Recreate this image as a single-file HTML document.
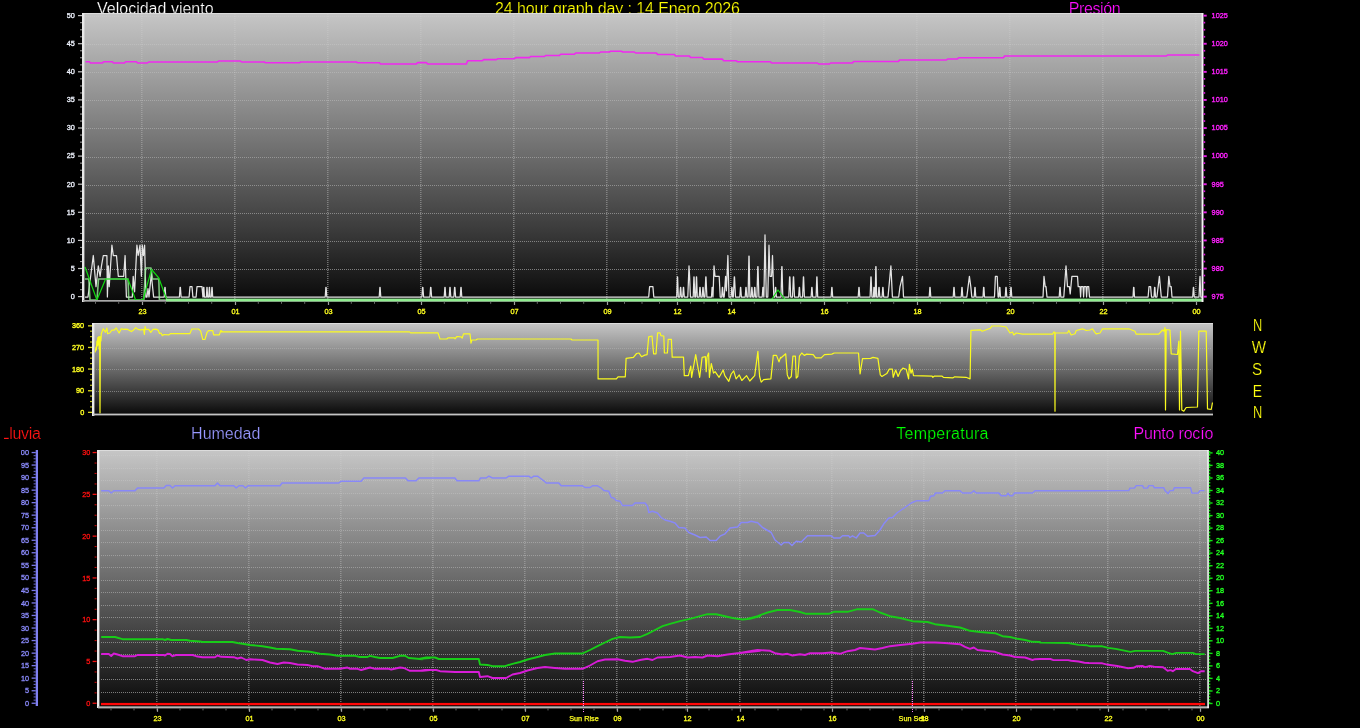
<!DOCTYPE html>
<html lang="es"><head><meta charset="utf-8"><title>24 hour graph</title>
<style>html,body{margin:0;padding:0;background:#000;}body{width:1360px;height:728px;overflow:hidden;font-family:"Liberation Sans",Arial,sans-serif;}svg{display:block;will-change:transform}text{font-family:"Liberation Sans",Arial,sans-serif;}</style>
</head><body>
<svg width="1360" height="728" viewBox="0 0 1360 728">
<defs>
<linearGradient id="g1" x1="0" y1="0" x2="0" y2="1"><stop offset="0" stop-color="rgb(198,198,198)"/><stop offset="0.25" stop-color="rgb(153,153,153)"/><stop offset="0.5" stop-color="rgb(107,107,107)"/><stop offset="0.75" stop-color="rgb(60,60,60)"/><stop offset="1" stop-color="rgb(10,10,10)"/></linearGradient>
<clipPath id="cT"><rect x="83" y="13" width="1120" height="289"/></clipPath>
<clipPath id="cM"><rect x="93" y="323" width="1120" height="93"/></clipPath>
<clipPath id="cB"><rect x="98" y="450" width="1110" height="263"/></clipPath>
<clipPath id="cl"><rect x="4" y="415" width="100" height="34"/></clipPath>
<clipPath id="ch"><rect x="21" y="450" width="30" height="270"/></clipPath>
<clipPath id="cTl"><rect x="0" y="13" width="1360" height="300"/></clipPath>
<clipPath id="cMl"><rect x="0" y="323" width="1360" height="100"/></clipPath>
<clipPath id="cBl"><rect x="0" y="450" width="1360" height="278"/></clipPath>
</defs>
<text x="97.0" y="13.6" fill="#ffffff" font-size="16" text-anchor="start" stroke="#000" stroke-width="0.22" textLength="116.6" lengthAdjust="spacing" >Velocidad viento</text>
<text x="495.0" y="13.6" fill="#ffff00" font-size="16" text-anchor="start" stroke="#000" stroke-width="0.22" textLength="245" lengthAdjust="spacing" >24 hour graph day : 14 Enero 2026</text>
<text x="1068.8" y="13.6" fill="#ff10ff" font-size="16" text-anchor="start" stroke="#000" stroke-width="0.22" textLength="51.8" lengthAdjust="spacing" >Presión</text>
<rect x="83" y="13" width="1120" height="287" fill="url(#g1)"/>
<rect x="83" y="13" width="1120" height="1" fill="#dcdcdc"/>
<line x1="86" x2="1202" y1="269.5" y2="269.5" stroke="#dcdcdc" stroke-opacity="0.51" stroke-width="1" stroke-dasharray="1 1" shape-rendering="crispEdges"/>
<line x1="86" x2="1202" y1="241.5" y2="241.5" stroke="#dcdcdc" stroke-opacity="0.48" stroke-width="1" stroke-dasharray="1 1" shape-rendering="crispEdges"/>
<line x1="86" x2="1202" y1="213.5" y2="213.5" stroke="#dcdcdc" stroke-opacity="0.45" stroke-width="1" stroke-dasharray="1 1" shape-rendering="crispEdges"/>
<line x1="86" x2="1202" y1="185.5" y2="185.5" stroke="#dcdcdc" stroke-opacity="0.42" stroke-width="1" stroke-dasharray="1 1" shape-rendering="crispEdges"/>
<line x1="86" x2="1202" y1="157.5" y2="157.5" stroke="#dcdcdc" stroke-opacity="0.39" stroke-width="1" stroke-dasharray="1 1" shape-rendering="crispEdges"/>
<line x1="86" x2="1202" y1="128.5" y2="128.5" stroke="#dcdcdc" stroke-opacity="0.35" stroke-width="1" stroke-dasharray="1 1" shape-rendering="crispEdges"/>
<line x1="86" x2="1202" y1="100.5" y2="100.5" stroke="#dcdcdc" stroke-opacity="0.32" stroke-width="1" stroke-dasharray="1 1" shape-rendering="crispEdges"/>
<line x1="86" x2="1202" y1="72.5" y2="72.5" stroke="#dcdcdc" stroke-opacity="0.29" stroke-width="1" stroke-dasharray="1 1" shape-rendering="crispEdges"/>
<line x1="86" x2="1202" y1="44.5" y2="44.5" stroke="#dcdcdc" stroke-opacity="0.26" stroke-width="1" stroke-dasharray="1 1" shape-rendering="crispEdges"/>
<line x1="86" x2="1202" y1="16.5" y2="16.5" stroke="#dcdcdc" stroke-opacity="0.22" stroke-width="1" stroke-dasharray="1 1" shape-rendering="crispEdges"/>
<linearGradient id="vgT" gradientUnits="userSpaceOnUse" x1="0" y1="13" x2="0" y2="300"><stop offset="0" stop-color="#dcdcdc" stop-opacity="0.3"/><stop offset="1" stop-color="#dcdcdc" stop-opacity="0.7"/></linearGradient>
<line x1="141.85" x2="141.85" y1="14" y2="300" stroke="url(#vgT)" stroke-width="1" stroke-dasharray="1 1"/>
<line x1="234.85" x2="234.85" y1="14" y2="300" stroke="url(#vgT)" stroke-width="1" stroke-dasharray="1 1"/>
<line x1="327.85" x2="327.85" y1="14" y2="300" stroke="url(#vgT)" stroke-width="1" stroke-dasharray="1 1"/>
<line x1="420.85" x2="420.85" y1="14" y2="300" stroke="url(#vgT)" stroke-width="1" stroke-dasharray="1 1"/>
<line x1="513.85" x2="513.85" y1="14" y2="300" stroke="url(#vgT)" stroke-width="1" stroke-dasharray="1 1"/>
<line x1="606.85" x2="606.85" y1="14" y2="300" stroke="url(#vgT)" stroke-width="1" stroke-dasharray="1 1"/>
<line x1="676.85" x2="676.85" y1="14" y2="300" stroke="url(#vgT)" stroke-width="1" stroke-dasharray="1 1"/>
<line x1="730.85" x2="730.85" y1="14" y2="300" stroke="url(#vgT)" stroke-width="1" stroke-dasharray="1 1"/>
<line x1="823.85" x2="823.85" y1="14" y2="300" stroke="url(#vgT)" stroke-width="1" stroke-dasharray="1 1"/>
<line x1="916.85" x2="916.85" y1="14" y2="300" stroke="url(#vgT)" stroke-width="1" stroke-dasharray="1 1"/>
<line x1="1009.85" x2="1009.85" y1="14" y2="300" stroke="url(#vgT)" stroke-width="1" stroke-dasharray="1 1"/>
<line x1="1102.85" x2="1102.85" y1="14" y2="300" stroke="url(#vgT)" stroke-width="1" stroke-dasharray="1 1"/>
<line x1="1195.85" x2="1195.85" y1="14" y2="300" stroke="url(#vgT)" stroke-width="1" stroke-dasharray="1 1"/>
<g clip-path="url(#cT)">
<polyline points="85.6,61.8 89.4,61.8 90.6,63.0 102.4,63.0 103.6,61.8 112.4,61.8 113.6,63.0 124.4,63.0 125.6,61.8 136.4,61.8 137.6,63.0 147.4,63.0 148.6,62.0 217.4,62.0 218.6,61.0 240.4,61.0 241.6,62.0 264.4,62.0 265.6,62.8 299.4,62.8 300.6,62.0 356.4,62.0 357.6,62.8 379.4,62.8 380.6,64.0 416.4,64.0 417.6,62.6 426.4,62.6 427.6,64.0 466.4,64.0 467.6,60.8 482.4,60.8 483.6,59.6 496.4,59.6 497.6,58.8 514.4,58.8 515.6,57.6 529.4,57.6 530.6,56.5 544.4,56.5 545.6,55.5 559.4,55.5 560.6,54.2 574.4,54.2 575.6,53.0 599.4,53.0 600.6,52.0 609.4,52.0 610.6,51.2 621.4,51.2 622.6,52.0 634.4,52.0 635.6,53.0 656.4,53.0 657.6,54.5 674.4,54.5 675.6,56.0 689.4,56.0 690.6,57.5 702.4,57.5 703.6,59.1 722.4,59.1 723.6,60.8 736.4,60.8 737.6,61.8 770.4,61.8 771.6,63.0 817.4,63.0 818.6,64.0 829.4,64.0 830.6,63.0 852.4,63.0 853.6,61.5 898.4,61.5 899.6,60.0 946.4,60.0 947.6,59.0 957.4,59.0 958.6,57.8 1003.4,57.8 1004.6,56.0 1166.4,56.0 1167.6,55.0 1199.4,55.0" fill="none" stroke="#f028f0" stroke-width="1.6" stroke-linejoin="round" />
<polyline points="85.0,297.0 88.0,297.0 93.3,255.5 96.0,286.6 98.3,265.9 100.1,276.3 101.5,265.9 103.3,255.5 106.9,255.5 107.4,297.0 108.3,265.9 109.2,286.6 111.9,245.2 113.3,255.5 116.5,255.5 118.3,276.3 123.7,276.3 125.1,255.5 126.4,297.0 132.3,297.0 133.2,276.3 134.6,291.8 136.9,245.2 138.2,255.5 140.0,245.2 141.4,276.3 142.3,245.2 143.4,255.5 144.6,245.2 145.9,297.0 147.0,297.0 148.0,288.7 149.0,297.0 151.3,274.2 153.6,297.0 164.2,297.0 164.9,287.3 165.1,287.3 165.8,297.0 179.4,297.0 180.1,287.3 180.4,287.3 181.1,297.0 189.1,297.0 190.0,286.6 192.0,286.6 192.9,297.0 196.1,297.0 197.0,286.6 202.0,286.6 202.9,297.0 203.1,297.0 203.6,287.3 203.9,287.3 204.4,297.0 206.4,297.0 206.9,287.3 207.1,287.3 207.6,297.0 208.8,297.0 209.3,287.3 209.5,287.3 210.0,297.0 211.3,297.0 211.9,287.3 212.1,287.3 212.7,297.0 325.2,297.0 325.9,287.3 326.1,287.3 326.8,297.0 379.2,297.0 379.9,287.3 380.1,287.3 380.8,297.0 421.9,297.0 422.6,287.3 422.9,287.3 423.6,297.0 429.9,297.0 430.6,287.3 430.9,287.3 431.6,297.0 444.2,297.0 444.9,287.3 445.1,287.3 445.8,297.0 449.2,297.0 449.9,287.3 450.1,287.3 450.8,297.0 453.9,297.0 454.6,287.3 454.9,287.3 455.6,297.0 460.2,297.0 460.9,287.3 461.1,287.3 461.8,297.0 648.7,297.0 649.6,286.6 652.9,286.6 653.8,297.0 676.7,297.0 677.4,276.9 677.6,276.9 678.3,297.0 679.8,297.0 680.5,287.3 680.7,287.3 681.4,297.0 682.7,297.0 683.4,287.3 683.6,287.3 684.3,297.0 687.8,297.0 689.0,265.9 689.6,276.3 690.4,297.0 693.2,297.0 693.9,276.9 694.1,276.9 694.8,297.0 695.7,297.0 696.4,276.9 696.6,276.9 697.3,297.0 699.2,297.0 699.9,287.3 700.1,287.3 700.8,297.0 702.2,297.0 702.9,287.3 703.1,287.3 703.8,297.0 704.9,297.0 705.8,276.9 706.0,276.9 706.9,297.0 711.5,297.0 712.1,287.3 712.4,287.3 713.0,297.0 713.0,297.0 714.0,265.9 715.0,276.3 719.2,276.3 720.2,297.0 721.7,297.0 722.4,287.3 722.6,287.3 723.3,297.0 724.2,297.0 725.6,276.3 726.4,290.8 727.9,255.5 729.0,297.0 731.1,297.0 731.8,287.3 732.0,287.3 732.7,297.0 733.3,297.0 734.3,276.9 734.5,276.9 735.5,297.0 739.8,297.0 740.5,287.3 740.7,287.3 741.4,297.0 745.2,297.0 745.9,287.3 746.1,287.3 746.8,297.0 748.1,297.0 748.9,256.1 749.1,256.1 749.9,297.0 751.1,297.0 751.8,287.3 752.0,287.3 752.7,297.0 754.0,297.0 754.6,287.3 754.9,287.3 755.5,297.0 756.9,297.0 757.8,266.5 758.0,266.5 758.9,297.0 762.2,297.0 762.9,287.3 763.1,287.3 763.8,297.0 763.9,297.0 765.0,234.8 766.3,297.0 767.8,297.0 769.0,245.2 770.0,276.3 771.6,276.3 772.5,255.5 773.8,297.0 774.8,297.0 775.5,287.3 775.7,287.3 776.4,297.0 781.0,297.0 781.8,266.5 782.0,266.5 782.8,297.0 788.8,297.0 789.6,276.9 789.9,276.9 790.7,297.0 792.5,297.0 793.4,276.9 793.6,276.9 794.5,297.0 798.6,297.0 799.3,287.3 799.5,287.3 800.2,297.0 802.6,297.0 803.4,276.9 803.6,276.9 804.4,297.0 811.1,297.0 811.8,287.3 812.0,287.3 812.7,297.0 816.1,297.0 816.8,276.9 817.0,276.9 817.7,297.0 831.1,297.0 831.8,287.3 832.0,287.3 832.7,297.0 858.2,297.0 858.9,287.3 859.1,287.3 859.8,297.0 870.1,297.0 870.9,276.9 871.1,276.9 871.9,297.0 873.4,297.0 873.9,287.3 874.1,287.3 874.6,297.0 875.2,297.0 875.8,266.5 876.0,266.5 876.6,297.0 878.2,297.0 878.9,287.3 879.1,287.3 879.8,297.0 882.1,297.0 882.8,287.3 883.0,287.3 883.7,297.0 888.0,297.0 890.9,265.9 892.4,297.0 898.7,297.0 900.0,286.6 902.5,276.3 903.5,297.0 929.2,297.0 929.9,287.3 930.1,287.3 930.8,297.0 953.2,297.0 953.9,287.3 954.1,287.3 954.8,297.0 961.2,297.0 961.9,287.3 962.1,287.3 962.8,297.0 966.8,297.0 969.4,276.3 970.8,286.6 971.8,297.0 974.2,297.0 974.9,287.3 975.1,287.3 975.8,297.0 983.0,297.0 983.6,287.3 983.9,287.3 984.5,297.0 994.5,297.0 995.4,276.3 997.2,276.3 998.1,297.0 999.0,297.0 999.6,287.3 999.9,287.3 1000.5,297.0 1005.2,297.0 1005.9,287.3 1006.1,287.3 1006.8,297.0 1010.2,297.0 1010.9,287.3 1011.1,287.3 1011.8,297.0 1043.0,297.0 1044.0,276.3 1045.2,286.6 1046.0,286.6 1047.0,297.0 1059.2,297.0 1059.9,287.3 1060.1,287.3 1060.8,297.0 1063.8,297.0 1066.0,265.9 1067.5,286.6 1069.4,286.6 1070.2,293.9 1071.9,276.3 1077.5,276.3 1078.2,286.6 1080.0,286.6 1080.6,297.0 1081.2,286.6 1083.0,286.6 1083.6,297.0 1084.2,286.6 1086.0,286.6 1086.6,297.0 1087.2,286.6 1088.7,286.6 1089.5,297.0 1133.0,297.0 1133.6,287.3 1133.9,287.3 1134.5,297.0 1148.1,297.0 1149.0,286.6 1150.6,286.6 1151.5,297.0 1154.0,297.0 1154.6,287.3 1154.9,287.3 1155.5,297.0 1156.9,297.0 1159.4,276.3 1161.3,297.0 1167.5,297.0 1168.8,276.3 1170.0,286.6 1171.2,286.6 1172.0,297.0 1192.7,297.0 1193.4,287.3 1193.6,287.3 1194.3,297.0 1199.0,297.0 1200.0,276.3 1200.8,297.0 1202.0,297.0" fill="none" stroke="#e4e4e4" stroke-width="1.25" stroke-linejoin="round" />
<polyline points="85.0,279.0 88.8,279.0 90.0,300.0 97.0,300.0 98.5,279.0 128.0,279.0 128.8,300.0 143.8,300.0 145.6,268.0 151.0,268.0 152.5,279.0 158.8,279.0 159.4,300.0 170.0,300.0" fill="none" stroke="#98ee98" stroke-width="1.6" stroke-linejoin="round" stroke-opacity="0.8"/>
<polyline points="85.0,267.0 96.9,300.0 105.6,279.0 128.0,279.0 135.6,300.0 143.0,300.0 151.5,269.4 158.8,278.0 166.9,300.0" fill="none" stroke="#10d810" stroke-width="1.2" stroke-linejoin="round" />
<polyline points="771.2,300.0 778.0,290.0 785.6,300.0" fill="none" stroke="#10d810" stroke-width="1.2" stroke-linejoin="round" />
</g>
<rect x="82" y="13" width="2.4" height="289" fill="#e8e8e8"/>
<rect x="83" y="300" width="1120" height="1.7" fill="#a8a8a8"/>
<rect x="166" y="298.6" width="1036" height="2.8" fill="#90ee90"/>
<rect x="1201.6" y="13" width="1.9" height="289" fill="#f4f4f4"/>
<g clip-path="url(#cTl)" font-size="7.3">
<rect x="78" y="296.0" width="4" height="1.2" fill="#c0c0c0"/>
<rect x="1203.4" y="295.7" width="3.3" height="1.9" fill="#e820e8"/>
<text x="74.8" y="298.9" fill="#f0f4ff" text-anchor="end" stroke="#f0f4ff" stroke-width="0.3">0</text>
<text x="1211.6" y="298.9" fill="#ff20ff" text-anchor="start" stroke="#ff20ff" stroke-width="0.35">975</text>
<rect x="80" y="289.1" width="2" height="1.1" fill="#909090"/>
<rect x="1203.4" y="288.8" width="1.8" height="1.7" fill="#d818d8"/>
<rect x="80" y="282.1" width="2" height="1.1" fill="#909090"/>
<rect x="1203.4" y="281.8" width="1.8" height="1.7" fill="#d818d8"/>
<rect x="80" y="275.0" width="2" height="1.1" fill="#909090"/>
<rect x="1203.4" y="274.7" width="1.8" height="1.7" fill="#d818d8"/>
<rect x="78" y="267.9" width="4" height="1.2" fill="#c0c0c0"/>
<rect x="1203.4" y="267.6" width="3.3" height="1.9" fill="#e820e8"/>
<text x="74.8" y="270.8" fill="#f0f4ff" text-anchor="end" stroke="#f0f4ff" stroke-width="0.3">5</text>
<text x="1211.6" y="270.8" fill="#ff20ff" text-anchor="start" stroke="#ff20ff" stroke-width="0.35">980</text>
<rect x="80" y="261.0" width="2" height="1.1" fill="#909090"/>
<rect x="1203.4" y="260.7" width="1.8" height="1.7" fill="#d818d8"/>
<rect x="80" y="254.0" width="2" height="1.1" fill="#909090"/>
<rect x="1203.4" y="253.7" width="1.8" height="1.7" fill="#d818d8"/>
<rect x="80" y="246.9" width="2" height="1.1" fill="#909090"/>
<rect x="1203.4" y="246.6" width="1.8" height="1.7" fill="#d818d8"/>
<rect x="78" y="239.8" width="4" height="1.2" fill="#c0c0c0"/>
<rect x="1203.4" y="239.5" width="3.3" height="1.9" fill="#e820e8"/>
<text x="74.8" y="242.7" fill="#f0f4ff" text-anchor="end" stroke="#f0f4ff" stroke-width="0.3">10</text>
<text x="1211.6" y="242.7" fill="#ff20ff" text-anchor="start" stroke="#ff20ff" stroke-width="0.35">985</text>
<rect x="80" y="232.9" width="2" height="1.1" fill="#909090"/>
<rect x="1203.4" y="232.6" width="1.8" height="1.7" fill="#d818d8"/>
<rect x="80" y="225.9" width="2" height="1.1" fill="#909090"/>
<rect x="1203.4" y="225.6" width="1.8" height="1.7" fill="#d818d8"/>
<rect x="80" y="218.8" width="2" height="1.1" fill="#909090"/>
<rect x="1203.4" y="218.5" width="1.8" height="1.7" fill="#d818d8"/>
<rect x="78" y="211.7" width="4" height="1.2" fill="#c0c0c0"/>
<rect x="1203.4" y="211.4" width="3.3" height="1.9" fill="#e820e8"/>
<text x="74.8" y="214.6" fill="#f0f4ff" text-anchor="end" stroke="#f0f4ff" stroke-width="0.3">15</text>
<text x="1211.6" y="214.6" fill="#ff20ff" text-anchor="start" stroke="#ff20ff" stroke-width="0.35">990</text>
<rect x="80" y="204.8" width="2" height="1.1" fill="#909090"/>
<rect x="1203.4" y="204.5" width="1.8" height="1.7" fill="#d818d8"/>
<rect x="80" y="197.8" width="2" height="1.1" fill="#909090"/>
<rect x="1203.4" y="197.4" width="1.8" height="1.7" fill="#d818d8"/>
<rect x="80" y="190.7" width="2" height="1.1" fill="#909090"/>
<rect x="1203.4" y="190.4" width="1.8" height="1.7" fill="#d818d8"/>
<rect x="78" y="183.6" width="4" height="1.2" fill="#c0c0c0"/>
<rect x="1203.4" y="183.3" width="3.3" height="1.9" fill="#e820e8"/>
<text x="74.8" y="186.5" fill="#f0f4ff" text-anchor="end" stroke="#f0f4ff" stroke-width="0.3">20</text>
<text x="1211.6" y="186.5" fill="#ff20ff" text-anchor="start" stroke="#ff20ff" stroke-width="0.35">995</text>
<rect x="80" y="176.7" width="2" height="1.1" fill="#909090"/>
<rect x="1203.4" y="176.4" width="1.8" height="1.7" fill="#d818d8"/>
<rect x="80" y="169.7" width="2" height="1.1" fill="#909090"/>
<rect x="1203.4" y="169.4" width="1.8" height="1.7" fill="#d818d8"/>
<rect x="80" y="162.6" width="2" height="1.1" fill="#909090"/>
<rect x="1203.4" y="162.3" width="1.8" height="1.7" fill="#d818d8"/>
<rect x="78" y="155.5" width="4" height="1.2" fill="#c0c0c0"/>
<rect x="1203.4" y="155.2" width="3.3" height="1.9" fill="#e820e8"/>
<text x="74.8" y="158.4" fill="#f0f4ff" text-anchor="end" stroke="#f0f4ff" stroke-width="0.3">25</text>
<text x="1211.6" y="158.4" fill="#ff20ff" text-anchor="start" stroke="#ff20ff" stroke-width="0.35">1000</text>
<rect x="80" y="148.6" width="2" height="1.1" fill="#909090"/>
<rect x="1203.4" y="148.3" width="1.8" height="1.7" fill="#d818d8"/>
<rect x="80" y="141.6" width="2" height="1.1" fill="#909090"/>
<rect x="1203.4" y="141.2" width="1.8" height="1.7" fill="#d818d8"/>
<rect x="80" y="134.5" width="2" height="1.1" fill="#909090"/>
<rect x="1203.4" y="134.2" width="1.8" height="1.7" fill="#d818d8"/>
<rect x="78" y="127.4" width="4" height="1.2" fill="#c0c0c0"/>
<rect x="1203.4" y="127.1" width="3.3" height="1.9" fill="#e820e8"/>
<text x="74.8" y="130.3" fill="#f0f4ff" text-anchor="end" stroke="#f0f4ff" stroke-width="0.3">30</text>
<text x="1211.6" y="130.3" fill="#ff20ff" text-anchor="start" stroke="#ff20ff" stroke-width="0.35">1005</text>
<rect x="80" y="120.5" width="2" height="1.1" fill="#909090"/>
<rect x="1203.4" y="120.2" width="1.8" height="1.7" fill="#d818d8"/>
<rect x="80" y="113.5" width="2" height="1.1" fill="#909090"/>
<rect x="1203.4" y="113.2" width="1.8" height="1.7" fill="#d818d8"/>
<rect x="80" y="106.4" width="2" height="1.1" fill="#909090"/>
<rect x="1203.4" y="106.1" width="1.8" height="1.7" fill="#d818d8"/>
<rect x="78" y="99.3" width="4" height="1.2" fill="#c0c0c0"/>
<rect x="1203.4" y="99.0" width="3.3" height="1.9" fill="#e820e8"/>
<text x="74.8" y="102.2" fill="#f0f4ff" text-anchor="end" stroke="#f0f4ff" stroke-width="0.3">35</text>
<text x="1211.6" y="102.2" fill="#ff20ff" text-anchor="start" stroke="#ff20ff" stroke-width="0.35">1010</text>
<rect x="80" y="92.4" width="2" height="1.1" fill="#909090"/>
<rect x="1203.4" y="92.1" width="1.8" height="1.7" fill="#d818d8"/>
<rect x="80" y="85.4" width="2" height="1.1" fill="#909090"/>
<rect x="1203.4" y="85.1" width="1.8" height="1.7" fill="#d818d8"/>
<rect x="80" y="78.3" width="2" height="1.1" fill="#909090"/>
<rect x="1203.4" y="78.0" width="1.8" height="1.7" fill="#d818d8"/>
<rect x="78" y="71.2" width="4" height="1.2" fill="#c0c0c0"/>
<rect x="1203.4" y="70.9" width="3.3" height="1.9" fill="#e820e8"/>
<text x="74.8" y="74.1" fill="#f0f4ff" text-anchor="end" stroke="#f0f4ff" stroke-width="0.3">40</text>
<text x="1211.6" y="74.1" fill="#ff20ff" text-anchor="start" stroke="#ff20ff" stroke-width="0.35">1015</text>
<rect x="80" y="64.3" width="2" height="1.1" fill="#909090"/>
<rect x="1203.4" y="64.0" width="1.8" height="1.7" fill="#d818d8"/>
<rect x="80" y="57.2" width="2" height="1.1" fill="#909090"/>
<rect x="1203.4" y="57.0" width="1.8" height="1.7" fill="#d818d8"/>
<rect x="80" y="50.2" width="2" height="1.1" fill="#909090"/>
<rect x="1203.4" y="49.9" width="1.8" height="1.7" fill="#d818d8"/>
<rect x="78" y="43.1" width="4" height="1.2" fill="#c0c0c0"/>
<rect x="1203.4" y="42.8" width="3.3" height="1.9" fill="#e820e8"/>
<text x="74.8" y="46.0" fill="#f0f4ff" text-anchor="end" stroke="#f0f4ff" stroke-width="0.3">45</text>
<text x="1211.6" y="46.0" fill="#ff20ff" text-anchor="start" stroke="#ff20ff" stroke-width="0.35">1020</text>
<rect x="80" y="36.2" width="2" height="1.1" fill="#909090"/>
<rect x="1203.4" y="35.9" width="1.8" height="1.7" fill="#d818d8"/>
<rect x="80" y="29.2" width="2" height="1.1" fill="#909090"/>
<rect x="1203.4" y="28.9" width="1.8" height="1.7" fill="#d818d8"/>
<rect x="80" y="22.1" width="2" height="1.1" fill="#909090"/>
<rect x="1203.4" y="21.8" width="1.8" height="1.7" fill="#d818d8"/>
<rect x="78" y="15.0" width="4" height="1.2" fill="#c0c0c0"/>
<rect x="1203.4" y="14.7" width="3.3" height="1.9" fill="#e820e8"/>
<text x="74.8" y="17.9" fill="#f0f4ff" text-anchor="end" stroke="#f0f4ff" stroke-width="0.3">50</text>
<text x="1211.6" y="17.9" fill="#ff20ff" text-anchor="start" stroke="#ff20ff" stroke-width="0.35">1025</text>
</g>
<rect x="164.8" y="301.8" width="1" height="2" fill="#686868"/>
<rect x="188.0" y="301.8" width="1" height="2" fill="#686868"/>
<rect x="211.2" y="301.8" width="1" height="2" fill="#686868"/>
<rect x="257.8" y="301.8" width="1" height="2" fill="#686868"/>
<rect x="281.0" y="301.8" width="1" height="2" fill="#686868"/>
<rect x="304.2" y="301.8" width="1" height="2" fill="#686868"/>
<rect x="350.8" y="301.8" width="1" height="2" fill="#686868"/>
<rect x="374.0" y="301.8" width="1" height="2" fill="#686868"/>
<rect x="397.2" y="301.8" width="1" height="2" fill="#686868"/>
<rect x="443.8" y="301.8" width="1" height="2" fill="#686868"/>
<rect x="467.0" y="301.8" width="1" height="2" fill="#686868"/>
<rect x="490.2" y="301.8" width="1" height="2" fill="#686868"/>
<rect x="536.8" y="301.8" width="1" height="2" fill="#686868"/>
<rect x="560.0" y="301.8" width="1" height="2" fill="#686868"/>
<rect x="583.2" y="301.8" width="1" height="2" fill="#686868"/>
<rect x="624.0" y="301.8" width="1" height="2" fill="#686868"/>
<rect x="641.5" y="301.8" width="1" height="2" fill="#686868"/>
<rect x="659.0" y="301.8" width="1" height="2" fill="#686868"/>
<rect x="690.0" y="301.8" width="1" height="2" fill="#686868"/>
<rect x="703.5" y="301.8" width="1" height="2" fill="#686868"/>
<rect x="717.0" y="301.8" width="1" height="2" fill="#686868"/>
<rect x="753.8" y="301.8" width="1" height="2" fill="#686868"/>
<rect x="777.0" y="301.8" width="1" height="2" fill="#686868"/>
<rect x="800.2" y="301.8" width="1" height="2" fill="#686868"/>
<rect x="846.8" y="301.8" width="1" height="2" fill="#686868"/>
<rect x="870.0" y="301.8" width="1" height="2" fill="#686868"/>
<rect x="893.2" y="301.8" width="1" height="2" fill="#686868"/>
<rect x="939.8" y="301.8" width="1" height="2" fill="#686868"/>
<rect x="963.0" y="301.8" width="1" height="2" fill="#686868"/>
<rect x="986.2" y="301.8" width="1" height="2" fill="#686868"/>
<rect x="1032.8" y="301.8" width="1" height="2" fill="#686868"/>
<rect x="1056.0" y="301.8" width="1" height="2" fill="#686868"/>
<rect x="1079.2" y="301.8" width="1" height="2" fill="#686868"/>
<rect x="1125.8" y="301.8" width="1" height="2" fill="#686868"/>
<rect x="1149.0" y="301.8" width="1" height="2" fill="#686868"/>
<rect x="1172.2" y="301.8" width="1" height="2" fill="#686868"/>
<rect x="118.2" y="301.8" width="1" height="2" fill="#686868"/>
<rect x="95.0" y="301.8" width="1" height="2" fill="#686868"/>
<g font-size="7.3">
<rect x="141.9" y="301.8" width="1.2" height="3.2" fill="#a0a0a0"/>
<text x="142.5" y="313.5" fill="#ffff20" text-anchor="middle" stroke="#ffff20" stroke-width="0.3">23</text>
<rect x="234.9" y="301.8" width="1.2" height="3.2" fill="#a0a0a0"/>
<text x="235.5" y="313.5" fill="#ffff20" text-anchor="middle" stroke="#ffff20" stroke-width="0.3">01</text>
<rect x="327.9" y="301.8" width="1.2" height="3.2" fill="#a0a0a0"/>
<text x="328.5" y="313.5" fill="#ffff20" text-anchor="middle" stroke="#ffff20" stroke-width="0.3">03</text>
<rect x="420.9" y="301.8" width="1.2" height="3.2" fill="#a0a0a0"/>
<text x="421.5" y="313.5" fill="#ffff20" text-anchor="middle" stroke="#ffff20" stroke-width="0.3">05</text>
<rect x="513.9" y="301.8" width="1.2" height="3.2" fill="#a0a0a0"/>
<text x="514.5" y="313.5" fill="#ffff20" text-anchor="middle" stroke="#ffff20" stroke-width="0.3">07</text>
<rect x="606.9" y="301.8" width="1.2" height="3.2" fill="#a0a0a0"/>
<text x="607.5" y="313.5" fill="#ffff20" text-anchor="middle" stroke="#ffff20" stroke-width="0.3">09</text>
<rect x="676.9" y="301.8" width="1.2" height="3.2" fill="#a0a0a0"/>
<text x="677.5" y="313.5" fill="#ffff20" text-anchor="middle" stroke="#ffff20" stroke-width="0.3">12</text>
<rect x="730.9" y="301.8" width="1.2" height="3.2" fill="#a0a0a0"/>
<text x="731.5" y="313.5" fill="#ffff20" text-anchor="middle" stroke="#ffff20" stroke-width="0.3">14</text>
<rect x="823.9" y="301.8" width="1.2" height="3.2" fill="#a0a0a0"/>
<text x="824.5" y="313.5" fill="#ffff20" text-anchor="middle" stroke="#ffff20" stroke-width="0.3">16</text>
<rect x="916.9" y="301.8" width="1.2" height="3.2" fill="#a0a0a0"/>
<text x="917.5" y="313.5" fill="#ffff20" text-anchor="middle" stroke="#ffff20" stroke-width="0.3">18</text>
<rect x="1009.9" y="301.8" width="1.2" height="3.2" fill="#a0a0a0"/>
<text x="1010.5" y="313.5" fill="#ffff20" text-anchor="middle" stroke="#ffff20" stroke-width="0.3">20</text>
<rect x="1102.9" y="301.8" width="1.2" height="3.2" fill="#a0a0a0"/>
<text x="1103.5" y="313.5" fill="#ffff20" text-anchor="middle" stroke="#ffff20" stroke-width="0.3">22</text>
<rect x="1195.9" y="301.8" width="1.2" height="3.2" fill="#a0a0a0"/>
<text x="1196.5" y="313.5" fill="#ffff20" text-anchor="middle" stroke="#ffff20" stroke-width="0.3">00</text>
</g>
<rect x="93" y="323" width="1120" height="91" fill="url(#g1)"/>
<rect x="93" y="323" width="1120" height="1" fill="#dcdcdc"/>
<line x1="96" x2="1212" y1="348.5" y2="348.5" stroke="#dcdcdc" stroke-opacity="0.25" stroke-width="1" stroke-dasharray="1 1" shape-rendering="crispEdges"/>
<line x1="96" x2="1212" y1="369.5" y2="369.5" stroke="#dcdcdc" stroke-opacity="0.33" stroke-width="1" stroke-dasharray="1 1" shape-rendering="crispEdges"/>
<line x1="96" x2="1212" y1="391.5" y2="391.5" stroke="#dcdcdc" stroke-opacity="0.41" stroke-width="1" stroke-dasharray="1 1" shape-rendering="crispEdges"/>
<g clip-path="url(#cM)">
<polyline points="95.1,352.4 96.0,347.0 96.4,350.0 96.9,341.0 97.3,346.0 97.8,337.5 98.3,345.0 98.8,336.5 99.2,349.0 99.6,336.5 100.0,413.0 100.4,336.5 100.9,341.0 101.3,335.0 101.1,334.5 101.8,332.3 103.3,328.7 105.4,332.3 106.9,328.0 107.6,333.7 109.7,333.0 111.9,330.1 114.1,330.1 116.2,328.0 119.1,333.0 121.3,328.7 123.4,329.4 125.6,329.1 127.8,329.4 131.4,331.6 133.5,330.1 135.7,327.7 137.9,329.4 140.7,329.9 143.6,329.4 144.4,334.5 145.1,326.5 145.8,329.4 148.7,329.4 150.8,332.3 153.0,329.4 155.9,329.1 158.1,330.1 159.5,333.5 160.9,333.0 162.4,335.6 163.8,334.5 168.9,334.9 170.3,333.7 189.8,333.7 191.9,329.0 198.4,329.0 200.6,330.9 202.8,339.5 204.9,339.5 207.1,332.3 208.5,330.6 212.8,330.6 213.6,334.9 219.3,334.9 220.8,330.6 222.9,332.0 221.0,331.9 409.4,331.9 410.6,332.9 438.0,332.9 440.0,339.0 446.9,339.0 448.0,337.8 454.4,337.8 455.0,338.8 456.9,336.5 461.2,336.9 462.2,338.1 463.5,333.8 470.0,333.8 471.0,343.1 471.9,340.0 476.2,339.8 477.5,339.0 571.0,339.0 572.0,340.0 598.0,340.0 598.1,378.9 616.4,378.9 618.0,376.8 625.3,376.8 626.1,358.4 633.4,357.4 636.6,353.5 639.0,353.0 641.5,356.7 644.7,355.1 647.1,354.6 648.7,336.8 652.0,336.0 653.6,353.8 656.0,353.8 657.6,332.8 660.1,332.8 660.9,335.7 663.8,336.0 664.4,353.0 667.4,353.0 668.2,339.3 671.4,339.3 672.2,357.1 683.5,357.1 684.3,375.7 688.4,375.7 690.8,366.0 691.6,377.3 695.7,354.6 699.7,377.3 702.1,357.4 705.4,356.7 706.2,371.6 707.0,357.1 708.6,353.0 709.4,377.3 711.3,363.5 713.5,373.2 715.1,371.6 719.1,377.3 723.2,370.0 724.8,375.7 728.8,381.3 731.2,374.0 733.7,370.8 736.1,378.9 739.3,374.9 741.8,380.5 746.6,375.7 749.8,381.0 754.7,375.7 757.9,351.4 759.6,376.5 761.2,382.1 763.6,379.7 770.9,378.9 773.3,355.4 776.5,355.4 779.0,361.9 780.6,357.4 780.0,358.7 785.7,353.8 787.3,374.9 788.9,378.9 791.3,376.5 792.9,356.2 795.4,356.2 796.2,378.1 797.8,376.5 799.4,356.2 801.8,353.0 804.3,355.4 806.7,354.1 813.2,354.6 815.6,357.9 821.2,357.9 824.5,354.6 831.8,354.1 834.2,353.0 858.5,353.0 860.1,374.0 862.5,358.7 870.6,358.4 873.0,357.4 877.9,358.4 880.3,374.9 881.9,376.5 886.8,373.6 889.2,369.2 892.4,369.2 893.2,377.3 895.7,370.0 898.1,376.5 900.5,370.8 902.9,368.1 906.2,369.2 908.6,378.9 909.4,364.3 911.0,373.2 912.3,369.2 913.5,375.7 932.1,376.1 932.9,377.3 934.5,376.1 941.8,376.1 943.4,377.3 953.1,377.8 954.7,376.8 966.0,377.3 970.1,378.9 970.9,330.4 980.6,329.9 982.2,331.2 990.3,328.3 991.9,326.0 1000.0,326.0 1006.2,327.0 1010.0,333.0 1012.5,332.0 1013.8,335.0 1016.2,333.0 1022.5,334.2 1052.5,334.2 1053.8,332.0 1054.8,332.0 1055.0,411.2 1055.2,333.0 1067.5,333.0 1068.8,330.5 1071.2,335.0 1075.0,333.8 1076.2,330.5 1082.5,328.8 1086.2,330.5 1090.0,330.0 1092.5,328.8 1095.0,332.5 1096.2,333.8 1100.0,333.0 1102.5,328.8 1128.8,328.8 1135.0,331.2 1136.2,334.2 1158.8,334.2 1162.5,330.0 1163.8,331.2 1165.0,327.5 1165.5,410.0 1166.2,329.5 1170.0,330.0 1171.2,353.8 1177.5,354.5 1178.8,341.2 1179.5,410.0 1180.5,331.2 1181.8,410.0 1183.8,411.2 1186.2,407.5 1197.5,407.0 1198.8,331.2 1206.2,331.2 1207.5,408.8 1211.2,409.5 1212.5,402.5" fill="none" stroke="#fafa20" stroke-width="1.2" stroke-linejoin="round" />
</g>
<rect x="92" y="323" width="2.4" height="93" fill="#ececec"/>
<rect x="93" y="413.6" width="1120" height="1.8" fill="#c4c4c4"/>
<g clip-path="url(#cMl)" font-size="7.3">
<rect x="88" y="411.7" width="4" height="1.3" fill="#d8d820"/>
<text x="84.2" y="414.9" fill="#ffff20" text-anchor="end" stroke="#ffff20" stroke-width="0.35">0</text>
<rect x="90" y="406.3" width="2" height="1.2" fill="#b8b818"/>
<rect x="90" y="400.9" width="2" height="1.2" fill="#b8b818"/>
<rect x="90" y="395.5" width="2" height="1.2" fill="#b8b818"/>
<rect x="88" y="390.1" width="4" height="1.3" fill="#d8d820"/>
<text x="84.2" y="393.3" fill="#ffff20" text-anchor="end" stroke="#ffff20" stroke-width="0.35">90</text>
<rect x="90" y="384.7" width="2" height="1.2" fill="#b8b818"/>
<rect x="90" y="379.3" width="2" height="1.2" fill="#b8b818"/>
<rect x="90" y="373.8" width="2" height="1.2" fill="#b8b818"/>
<rect x="88" y="368.4" width="4" height="1.3" fill="#d8d820"/>
<text x="84.2" y="371.6" fill="#ffff20" text-anchor="end" stroke="#ffff20" stroke-width="0.35">180</text>
<rect x="90" y="363.0" width="2" height="1.2" fill="#b8b818"/>
<rect x="90" y="357.6" width="2" height="1.2" fill="#b8b818"/>
<rect x="90" y="352.2" width="2" height="1.2" fill="#b8b818"/>
<rect x="88" y="346.8" width="4" height="1.3" fill="#d8d820"/>
<text x="84.2" y="350.0" fill="#ffff20" text-anchor="end" stroke="#ffff20" stroke-width="0.35">270</text>
<rect x="90" y="341.4" width="2" height="1.2" fill="#b8b818"/>
<rect x="90" y="336.0" width="2" height="1.2" fill="#b8b818"/>
<rect x="90" y="330.6" width="2" height="1.2" fill="#b8b818"/>
<rect x="88" y="325.2" width="4" height="1.3" fill="#d8d820"/>
<text x="84.2" y="328.4" fill="#ffff20" text-anchor="end" stroke="#ffff20" stroke-width="0.35">360</text>
</g>
<text x="1252.9" y="330.6" fill="#ffff10" font-size="16" textLength="9.24" lengthAdjust="spacingAndGlyphs" stroke="#000" stroke-width="0.22">N</text>
<text x="1251.7" y="353.1" fill="#ffff10" font-size="16" textLength="14.34" lengthAdjust="spacingAndGlyphs" stroke="#000" stroke-width="0.22">W</text>
<text x="1252.1" y="375.4" fill="#ffff10" font-size="16" textLength="10.14" lengthAdjust="spacingAndGlyphs" stroke="#000" stroke-width="0.22">S</text>
<text x="1252.8" y="397.1" fill="#ffff10" font-size="16" textLength="9.28" lengthAdjust="spacingAndGlyphs" stroke="#000" stroke-width="0.22">E</text>
<text x="1252.9" y="417.7" fill="#ffff10" font-size="16" textLength="9.24" lengthAdjust="spacingAndGlyphs" stroke="#000" stroke-width="0.22">N</text>
<g clip-path="url(#cl)"><text x="0.5" y="438.8" fill="#ff1414" font-size="16" text-anchor="start" stroke="#000" stroke-width="0.22" textLength="40.5" lengthAdjust="spacing" >Lluvia</text></g>
<text x="191.1" y="438.8" fill="#9898ff" font-size="16" text-anchor="start" stroke="#000" stroke-width="0.22" textLength="69.2" lengthAdjust="spacing" >Humedad</text>
<text x="896.3" y="438.8" fill="#00ff00" font-size="16" text-anchor="start" stroke="#000" stroke-width="0.22" textLength="92.2" lengthAdjust="spacing" >Temperatura</text>
<text x="1133.5" y="438.8" fill="#ff10ff" font-size="16" text-anchor="start" stroke="#000" stroke-width="0.22" textLength="79.8" lengthAdjust="spacing" >Punto rocío</text>
<rect x="98" y="450" width="1110" height="256" fill="url(#g1)"/>
<rect x="98" y="450" width="1110" height="1" fill="#dcdcdc"/>
<line x1="101" x2="1207" y1="692.5" y2="692.5" stroke="#dcdcdc" stroke-opacity="0.53" stroke-width="1" stroke-dasharray="1 1" shape-rendering="crispEdges"/>
<line x1="101" x2="1207" y1="679.5" y2="679.5" stroke="#dcdcdc" stroke-opacity="0.52" stroke-width="1" stroke-dasharray="1 1" shape-rendering="crispEdges"/>
<line x1="101" x2="1207" y1="667.5" y2="667.5" stroke="#dcdcdc" stroke-opacity="0.50" stroke-width="1" stroke-dasharray="1 1" shape-rendering="crispEdges"/>
<line x1="101" x2="1207" y1="654.5" y2="654.5" stroke="#dcdcdc" stroke-opacity="0.48" stroke-width="1" stroke-dasharray="1 1" shape-rendering="crispEdges"/>
<line x1="101" x2="1207" y1="642.5" y2="642.5" stroke="#dcdcdc" stroke-opacity="0.47" stroke-width="1" stroke-dasharray="1 1" shape-rendering="crispEdges"/>
<line x1="101" x2="1207" y1="630.5" y2="630.5" stroke="#dcdcdc" stroke-opacity="0.45" stroke-width="1" stroke-dasharray="1 1" shape-rendering="crispEdges"/>
<line x1="101" x2="1207" y1="617.5" y2="617.5" stroke="#dcdcdc" stroke-opacity="0.44" stroke-width="1" stroke-dasharray="1 1" shape-rendering="crispEdges"/>
<line x1="101" x2="1207" y1="605.5" y2="605.5" stroke="#dcdcdc" stroke-opacity="0.42" stroke-width="1" stroke-dasharray="1 1" shape-rendering="crispEdges"/>
<line x1="101" x2="1207" y1="592.5" y2="592.5" stroke="#dcdcdc" stroke-opacity="0.40" stroke-width="1" stroke-dasharray="1 1" shape-rendering="crispEdges"/>
<line x1="101" x2="1207" y1="580.5" y2="580.5" stroke="#dcdcdc" stroke-opacity="0.39" stroke-width="1" stroke-dasharray="1 1" shape-rendering="crispEdges"/>
<line x1="101" x2="1207" y1="567.5" y2="567.5" stroke="#dcdcdc" stroke-opacity="0.37" stroke-width="1" stroke-dasharray="1 1" shape-rendering="crispEdges"/>
<line x1="101" x2="1207" y1="555.5" y2="555.5" stroke="#dcdcdc" stroke-opacity="0.36" stroke-width="1" stroke-dasharray="1 1" shape-rendering="crispEdges"/>
<line x1="101" x2="1207" y1="542.5" y2="542.5" stroke="#dcdcdc" stroke-opacity="0.34" stroke-width="1" stroke-dasharray="1 1" shape-rendering="crispEdges"/>
<line x1="101" x2="1207" y1="530.5" y2="530.5" stroke="#dcdcdc" stroke-opacity="0.32" stroke-width="1" stroke-dasharray="1 1" shape-rendering="crispEdges"/>
<line x1="101" x2="1207" y1="518.5" y2="518.5" stroke="#dcdcdc" stroke-opacity="0.31" stroke-width="1" stroke-dasharray="1 1" shape-rendering="crispEdges"/>
<line x1="101" x2="1207" y1="505.5" y2="505.5" stroke="#dcdcdc" stroke-opacity="0.29" stroke-width="1" stroke-dasharray="1 1" shape-rendering="crispEdges"/>
<line x1="101" x2="1207" y1="493.5" y2="493.5" stroke="#dcdcdc" stroke-opacity="0.28" stroke-width="1" stroke-dasharray="1 1" shape-rendering="crispEdges"/>
<line x1="101" x2="1207" y1="480.5" y2="480.5" stroke="#dcdcdc" stroke-opacity="0.26" stroke-width="1" stroke-dasharray="1 1" shape-rendering="crispEdges"/>
<line x1="101" x2="1207" y1="468.5" y2="468.5" stroke="#dcdcdc" stroke-opacity="0.24" stroke-width="1" stroke-dasharray="1 1" shape-rendering="crispEdges"/>
<line x1="101" x2="1207" y1="455.5" y2="455.5" stroke="#dcdcdc" stroke-opacity="0.23" stroke-width="1" stroke-dasharray="1 1" shape-rendering="crispEdges"/>
<linearGradient id="vgB" gradientUnits="userSpaceOnUse" x1="0" y1="450" x2="0" y2="706"><stop offset="0" stop-color="#dcdcdc" stop-opacity="0.3"/><stop offset="1" stop-color="#dcdcdc" stop-opacity="0.7"/></linearGradient>
<line x1="156.85" x2="156.85" y1="451" y2="706" stroke="url(#vgB)" stroke-width="1" stroke-dasharray="1 1"/>
<line x1="248.85" x2="248.85" y1="451" y2="706" stroke="url(#vgB)" stroke-width="1" stroke-dasharray="1 1"/>
<line x1="340.85" x2="340.85" y1="451" y2="706" stroke="url(#vgB)" stroke-width="1" stroke-dasharray="1 1"/>
<line x1="432.85" x2="432.85" y1="451" y2="706" stroke="url(#vgB)" stroke-width="1" stroke-dasharray="1 1"/>
<line x1="524.85" x2="524.85" y1="451" y2="706" stroke="url(#vgB)" stroke-width="1" stroke-dasharray="1 1"/>
<line x1="616.85" x2="616.85" y1="451" y2="706" stroke="url(#vgB)" stroke-width="1" stroke-dasharray="1 1"/>
<line x1="686.85" x2="686.85" y1="451" y2="706" stroke="url(#vgB)" stroke-width="1" stroke-dasharray="1 1"/>
<line x1="739.85" x2="739.85" y1="451" y2="706" stroke="url(#vgB)" stroke-width="1" stroke-dasharray="1 1"/>
<line x1="831.85" x2="831.85" y1="451" y2="706" stroke="url(#vgB)" stroke-width="1" stroke-dasharray="1 1"/>
<line x1="923.85" x2="923.85" y1="451" y2="706" stroke="url(#vgB)" stroke-width="1" stroke-dasharray="1 1"/>
<line x1="1015.85" x2="1015.85" y1="451" y2="706" stroke="url(#vgB)" stroke-width="1" stroke-dasharray="1 1"/>
<line x1="1107.85" x2="1107.85" y1="451" y2="706" stroke="url(#vgB)" stroke-width="1" stroke-dasharray="1 1"/>
<line x1="1199.85" x2="1199.85" y1="451" y2="706" stroke="url(#vgB)" stroke-width="1" stroke-dasharray="1 1"/>
<linearGradient id="vgB2" gradientUnits="userSpaceOnUse" x1="0" y1="450" x2="0" y2="706"><stop offset="0" stop-color="#dcdcdc" stop-opacity="0.18"/><stop offset="1" stop-color="#dcdcdc" stop-opacity="0.4"/></linearGradient>
<line x1="582.85" x2="582.85" y1="451" y2="706" stroke="url(#vgB2)" stroke-width="1" stroke-dasharray="1 1"/>
<line x1="911.85" x2="911.85" y1="451" y2="706" stroke="url(#vgB2)" stroke-width="1" stroke-dasharray="1 1"/>
<g clip-path="url(#cB)">
<polyline points="101.2,490.8 108.8,490.8 111.2,493.0 113.8,490.8 135.0,490.8 137.5,488.0 163.8,488.0 166.2,485.5 170.0,485.5 172.5,488.0 175.0,485.8 215.0,485.8 217.5,483.0 220.0,485.8 233.8,485.8 236.2,488.0 238.8,485.8 243.0,485.8 245.5,488.0 248.0,485.8 280.0,485.8 282.0,483.0 338.8,483.0 341.2,481.2 361.2,481.2 363.8,478.0 405.5,478.0 408.0,480.8 416.2,480.8 418.8,478.0 430.0,478.0 455.0,478.0 457.0,480.8 478.8,480.8 480.5,478.0 486.2,478.0 488.8,476.2 492.5,478.0 506.2,478.0 508.8,476.2 528.8,476.2 531.2,478.0 533.8,476.2 537.5,476.2 540.0,478.0 543.8,480.8 546.2,483.0 558.8,483.0 561.2,485.8 582.5,485.8 585.0,487.5 590.0,487.5 592.5,485.8 597.5,485.8 601.2,488.0 603.8,490.5 608.8,491.2 611.2,497.5 613.8,498.0 616.2,500.5 620.0,501.2 622.5,505.5 632.5,505.5 635.0,503.0 645.0,503.0 647.5,506.2 648.8,512.5 652.5,511.2 657.5,513.0 661.2,517.5 665.0,520.0 670.0,521.2 675.0,523.0 678.8,527.5 685.0,528.0 688.8,532.5 695.0,535.0 700.0,537.5 706.2,537.0 710.0,540.5 716.2,540.5 720.0,536.2 725.0,533.8 730.0,528.0 737.5,527.0 741.2,522.5 747.5,522.5 751.2,521.2 756.2,522.5 757.5,522.5 762.5,527.5 771.2,532.5 775.0,540.0 781.2,545.0 783.8,542.5 788.8,542.5 792.0,545.5 796.2,541.2 801.2,542.0 807.5,535.8 831.2,535.8 833.8,538.0 840.0,538.0 842.5,535.8 848.8,535.8 850.0,537.5 852.5,535.8 856.2,538.0 860.0,533.0 863.8,533.0 867.5,536.2 875.0,535.5 880.0,530.0 883.8,523.8 888.8,518.0 892.5,517.5 897.5,512.5 905.0,507.5 911.2,503.0 916.2,500.8 928.8,500.8 930.5,496.2 933.8,495.8 935.5,493.0 942.5,493.0 945.0,490.8 960.0,490.8 962.5,493.0 971.2,493.0 973.8,490.8 976.2,493.0 998.8,493.0 1001.2,495.8 1006.2,495.8 1008.0,493.2 1010.0,495.8 1012.5,495.8 1014.5,493.0 1032.5,493.0 1035.0,490.8 1080.0,490.8 1128.8,490.6 1130.0,488.1 1134.4,488.1 1136.2,485.6 1142.5,485.6 1143.8,488.1 1147.5,488.1 1148.8,485.6 1153.1,485.6 1154.4,487.8 1163.8,487.8 1165.0,490.6 1168.1,493.5 1170.0,490.6 1173.1,490.6 1174.4,487.8 1190.6,487.8 1191.9,493.1 1198.1,493.1 1200.0,490.6 1204.4,490.6" fill="none" stroke="#8888f8" stroke-width="1.45" stroke-linejoin="round" />
<polyline points="101.2,637.0 115.0,637.0 122.5,639.2 162.5,639.2 165.0,640.0 167.5,639.0 171.2,640.0 186.2,640.0 190.0,640.8 200.0,641.5 202.5,642.0 232.5,642.0 237.5,643.0 242.5,643.8 250.0,645.0 262.5,646.2 270.0,647.5 276.2,648.8 290.0,649.2 297.5,650.8 310.0,651.8 320.0,653.8 330.0,654.5 337.5,655.8 355.0,655.8 360.0,657.0 367.5,657.0 370.0,655.8 375.0,657.0 380.0,658.0 392.5,658.0 400.0,655.8 405.0,655.8 408.8,658.0 417.5,658.8 422.5,659.2 426.2,658.0 430.0,658.0 420.0,658.8 426.2,657.5 435.0,657.5 438.8,659.0 478.8,659.0 480.0,664.5 487.5,665.0 492.5,666.2 505.0,666.2 512.5,663.8 520.0,662.0 527.5,659.5 537.5,657.0 545.0,655.0 555.0,653.5 582.5,653.5 590.0,650.0 597.5,646.2 605.0,642.5 612.5,638.8 620.0,637.0 630.0,637.5 640.0,637.0 647.5,633.8 655.0,630.0 662.5,626.2 670.0,623.8 680.0,621.2 690.0,618.8 700.0,616.2 707.5,614.2 716.2,614.2 725.0,616.2 732.5,618.0 742.5,619.5 750.0,618.8 760.0,616.2 747.5,618.8 757.5,616.2 767.5,612.5 777.5,610.0 790.0,610.0 800.0,612.0 806.2,613.8 828.8,613.8 833.8,611.8 847.5,611.8 857.5,609.2 872.5,609.2 880.0,612.5 890.0,616.2 900.0,618.0 912.5,621.2 927.5,622.0 935.0,624.2 947.5,625.8 960.0,627.5 970.0,630.8 980.0,632.0 995.0,633.2 1002.5,636.2 1010.0,637.0 1017.5,638.8 1025.0,640.0 1032.5,641.8 1040.0,642.0 1040.0,642.6 1068.2,643.0 1078.6,644.9 1086.0,645.2 1090.4,646.3 1102.3,646.3 1108.2,647.9 1115.7,648.9 1123.1,650.4 1130.5,651.9 1135.0,650.9 1163.1,650.9 1167.6,652.6 1172.0,654.1 1176.5,652.9 1192.8,652.9 1195.8,654.1 1204.7,654.1" fill="none" stroke="#18cc18" stroke-width="1.9" stroke-linejoin="round" />
<polyline points="101.2,654.0 108.8,654.0 111.2,656.0 113.8,653.5 117.5,654.5 122.5,656.2 135.0,656.2 137.5,655.0 163.8,655.0 165.0,655.5 167.5,653.8 170.0,654.0 172.5,656.2 176.2,655.0 192.5,655.0 196.2,656.2 202.5,657.2 215.0,657.2 217.5,655.5 221.2,656.8 233.8,657.2 237.5,658.5 241.2,657.5 246.2,660.0 250.0,659.2 262.5,660.0 270.0,662.5 277.5,664.0 283.8,662.5 290.0,663.0 297.5,664.5 307.5,665.0 312.5,666.2 317.5,666.2 325.0,668.8 340.0,668.8 347.5,667.5 350.0,668.8 357.5,668.8 361.2,670.0 370.0,667.5 375.0,668.8 388.8,668.8 391.2,669.5 400.0,667.5 403.8,668.0 410.0,670.8 422.5,670.8 430.0,670.0 420.0,670.8 425.0,670.0 436.2,670.0 440.0,671.2 455.0,672.0 478.8,672.0 480.0,677.0 487.5,676.2 492.5,678.0 506.2,678.0 512.5,674.5 520.0,673.0 527.5,670.5 537.5,668.0 545.0,667.0 555.0,668.0 565.0,668.8 582.5,668.8 590.0,665.5 597.5,661.2 605.0,659.5 617.5,659.2 625.0,660.8 632.5,661.8 640.0,660.0 647.5,658.8 652.5,660.0 657.5,657.5 670.0,657.0 680.0,655.5 687.5,657.5 695.0,657.0 702.5,657.5 707.5,655.5 717.5,656.2 727.5,654.5 737.5,653.2 745.0,652.5 752.5,650.8 760.0,650.8 740.0,653.0 750.0,651.2 757.5,650.0 770.0,650.8 775.0,653.2 782.5,654.5 787.5,653.8 792.5,655.5 800.0,654.2 805.0,655.0 810.0,653.2 822.5,653.2 831.2,652.5 840.0,653.8 847.5,651.2 855.0,650.0 860.0,648.0 867.5,648.8 875.0,649.5 882.5,648.0 890.0,646.2 900.0,645.0 912.5,643.8 920.0,642.5 935.0,642.5 945.0,643.0 960.0,644.2 965.0,646.8 970.0,648.8 973.8,647.5 977.5,650.0 995.0,651.8 1002.5,654.5 1010.0,655.5 1015.0,657.0 1025.0,657.5 1032.5,660.0 1035.0,659.2 1040.0,659.0 1050.4,659.0 1053.4,660.1 1068.2,660.1 1071.2,660.8 1078.6,661.5 1084.5,662.7 1089.0,663.0 1102.3,663.3 1108.2,664.8 1117.2,666.0 1124.6,667.5 1127.5,668.2 1133.5,667.8 1136.4,666.3 1142.4,666.0 1145.3,667.2 1149.8,666.0 1154.2,666.7 1163.1,667.2 1167.6,670.7 1170.6,670.1 1172.8,671.2 1175.8,669.0 1189.9,669.0 1192.8,671.2 1198.0,673.1 1201.0,671.2 1204.7,671.2" fill="none" stroke="#d81cd8" stroke-width="1.9" stroke-linejoin="round" />
<rect x="101" y="702.9" width="1104" height="2.3" fill="#ff0808"/>
<line x1="583.5" x2="583.5" y1="681" y2="712" stroke="#ff80ff" stroke-width="1.2" stroke-dasharray="1 1" shape-rendering="crispEdges"/>
<line x1="912.5" x2="912.5" y1="681" y2="712" stroke="#ff80ff" stroke-width="1.2" stroke-dasharray="1 1" shape-rendering="crispEdges"/>
</g>
<rect x="97" y="450" width="2.4" height="258" fill="#ececec"/>
<rect x="98" y="706.3" width="1111" height="2.1" fill="#b4b4b4"/>
<rect x="1207.3" y="450" width="1.6" height="258" fill="#f4f4f4"/>
<line x1="1209.6" x2="1209.6" y1="451" y2="705" stroke="#10e010" stroke-width="1.4" stroke-dasharray="1.6 1.5"/>
<g clip-path="url(#cBl)" font-size="7.3">
<rect x="92.6" y="702.6" width="4" height="1.3" fill="#f01010"/>
<text x="90.4" y="705.8" fill="#ff1010" text-anchor="end" stroke="#ff1010" stroke-width="0.3">0</text>
<rect x="94.6" y="692.3" width="2" height="1.1" fill="#c00808"/>
<rect x="94.6" y="681.8" width="2" height="1.1" fill="#c00808"/>
<rect x="94.6" y="671.4" width="2" height="1.1" fill="#c00808"/>
<rect x="92.6" y="660.8" width="4" height="1.3" fill="#f01010"/>
<text x="90.4" y="664.0" fill="#ff1010" text-anchor="end" stroke="#ff1010" stroke-width="0.3">5</text>
<rect x="94.6" y="650.5" width="2" height="1.1" fill="#c00808"/>
<rect x="94.6" y="640.0" width="2" height="1.1" fill="#c00808"/>
<rect x="94.6" y="629.6" width="2" height="1.1" fill="#c00808"/>
<rect x="92.6" y="619.0" width="4" height="1.3" fill="#f01010"/>
<text x="90.4" y="622.2" fill="#ff1010" text-anchor="end" stroke="#ff1010" stroke-width="0.3">10</text>
<rect x="94.6" y="608.7" width="2" height="1.1" fill="#c00808"/>
<rect x="94.6" y="598.2" width="2" height="1.1" fill="#c00808"/>
<rect x="94.6" y="587.8" width="2" height="1.1" fill="#c00808"/>
<rect x="92.6" y="577.3" width="4" height="1.3" fill="#f01010"/>
<text x="90.4" y="580.5" fill="#ff1010" text-anchor="end" stroke="#ff1010" stroke-width="0.3">15</text>
<rect x="94.6" y="566.9" width="2" height="1.1" fill="#c00808"/>
<rect x="94.6" y="556.5" width="2" height="1.1" fill="#c00808"/>
<rect x="94.6" y="546.0" width="2" height="1.1" fill="#c00808"/>
<rect x="92.6" y="535.5" width="4" height="1.3" fill="#f01010"/>
<text x="90.4" y="538.7" fill="#ff1010" text-anchor="end" stroke="#ff1010" stroke-width="0.3">20</text>
<rect x="94.6" y="525.1" width="2" height="1.1" fill="#c00808"/>
<rect x="94.6" y="514.7" width="2" height="1.1" fill="#c00808"/>
<rect x="94.6" y="504.2" width="2" height="1.1" fill="#c00808"/>
<rect x="92.6" y="493.7" width="4" height="1.3" fill="#f01010"/>
<text x="90.4" y="496.9" fill="#ff1010" text-anchor="end" stroke="#ff1010" stroke-width="0.3">25</text>
<rect x="94.6" y="483.4" width="2" height="1.1" fill="#c00808"/>
<rect x="94.6" y="472.9" width="2" height="1.1" fill="#c00808"/>
<rect x="94.6" y="462.5" width="2" height="1.1" fill="#c00808"/>
<rect x="92.6" y="451.9" width="4" height="1.3" fill="#f01010"/>
<text x="90.4" y="455.1" fill="#ff1010" text-anchor="end" stroke="#ff1010" stroke-width="0.3">30</text>
<rect x="1209" y="702.8" width="3.6" height="1.4" fill="#10e010"/>
<text x="1216" y="705.7" fill="#20ff20" text-anchor="start" stroke="#20ff20" stroke-width="0.35">0</text>
<rect x="1209" y="690.3" width="3.6" height="1.4" fill="#10e010"/>
<text x="1216" y="693.2" fill="#20ff20" text-anchor="start" stroke="#20ff20" stroke-width="0.35">2</text>
<rect x="1209" y="677.7" width="3.6" height="1.4" fill="#10e010"/>
<text x="1216" y="680.6" fill="#20ff20" text-anchor="start" stroke="#20ff20" stroke-width="0.35">4</text>
<rect x="1209" y="665.2" width="3.6" height="1.4" fill="#10e010"/>
<text x="1216" y="668.1" fill="#20ff20" text-anchor="start" stroke="#20ff20" stroke-width="0.35">6</text>
<rect x="1209" y="652.7" width="3.6" height="1.4" fill="#10e010"/>
<text x="1216" y="655.6" fill="#20ff20" text-anchor="start" stroke="#20ff20" stroke-width="0.35">8</text>
<rect x="1209" y="640.1" width="3.6" height="1.4" fill="#10e010"/>
<text x="1216" y="643.1" fill="#20ff20" text-anchor="start" stroke="#20ff20" stroke-width="0.35">10</text>
<rect x="1209" y="627.6" width="3.6" height="1.4" fill="#10e010"/>
<text x="1216" y="630.5" fill="#20ff20" text-anchor="start" stroke="#20ff20" stroke-width="0.35">12</text>
<rect x="1209" y="615.1" width="3.6" height="1.4" fill="#10e010"/>
<text x="1216" y="618.0" fill="#20ff20" text-anchor="start" stroke="#20ff20" stroke-width="0.35">14</text>
<rect x="1209" y="602.6" width="3.6" height="1.4" fill="#10e010"/>
<text x="1216" y="605.5" fill="#20ff20" text-anchor="start" stroke="#20ff20" stroke-width="0.35">16</text>
<rect x="1209" y="590.0" width="3.6" height="1.4" fill="#10e010"/>
<text x="1216" y="592.9" fill="#20ff20" text-anchor="start" stroke="#20ff20" stroke-width="0.35">18</text>
<rect x="1209" y="577.5" width="3.6" height="1.4" fill="#10e010"/>
<text x="1216" y="580.4" fill="#20ff20" text-anchor="start" stroke="#20ff20" stroke-width="0.35">20</text>
<rect x="1209" y="565.0" width="3.6" height="1.4" fill="#10e010"/>
<text x="1216" y="567.9" fill="#20ff20" text-anchor="start" stroke="#20ff20" stroke-width="0.35">22</text>
<rect x="1209" y="552.4" width="3.6" height="1.4" fill="#10e010"/>
<text x="1216" y="555.3" fill="#20ff20" text-anchor="start" stroke="#20ff20" stroke-width="0.35">24</text>
<rect x="1209" y="539.9" width="3.6" height="1.4" fill="#10e010"/>
<text x="1216" y="542.8" fill="#20ff20" text-anchor="start" stroke="#20ff20" stroke-width="0.35">26</text>
<rect x="1209" y="527.4" width="3.6" height="1.4" fill="#10e010"/>
<text x="1216" y="530.3" fill="#20ff20" text-anchor="start" stroke="#20ff20" stroke-width="0.35">28</text>
<rect x="1209" y="514.9" width="3.6" height="1.4" fill="#10e010"/>
<text x="1216" y="517.8" fill="#20ff20" text-anchor="start" stroke="#20ff20" stroke-width="0.35">30</text>
<rect x="1209" y="502.3" width="3.6" height="1.4" fill="#10e010"/>
<text x="1216" y="505.2" fill="#20ff20" text-anchor="start" stroke="#20ff20" stroke-width="0.35">32</text>
<rect x="1209" y="489.8" width="3.6" height="1.4" fill="#10e010"/>
<text x="1216" y="492.7" fill="#20ff20" text-anchor="start" stroke="#20ff20" stroke-width="0.35">34</text>
<rect x="1209" y="477.3" width="3.6" height="1.4" fill="#10e010"/>
<text x="1216" y="480.2" fill="#20ff20" text-anchor="start" stroke="#20ff20" stroke-width="0.35">36</text>
<rect x="1209" y="464.7" width="3.6" height="1.4" fill="#10e010"/>
<text x="1216" y="467.6" fill="#20ff20" text-anchor="start" stroke="#20ff20" stroke-width="0.35">38</text>
<rect x="1209" y="452.2" width="3.6" height="1.4" fill="#10e010"/>
<text x="1216" y="455.1" fill="#20ff20" text-anchor="start" stroke="#20ff20" stroke-width="0.35">40</text>
</g>
<rect x="35.7" y="450" width="2.3" height="256" fill="#8080f0"/>
<g clip-path="url(#ch)" font-size="7.3">
<rect x="31.6" y="702.6" width="4.2" height="1.3" fill="#7878e8"/>
<text x="29" y="705.8" fill="#8c8cff" text-anchor="end" stroke="#8c8cff" stroke-width="0.3">0</text>
<rect x="33.6" y="699.6" width="2.2" height="1.1" fill="#6060c0"/>
<rect x="33.6" y="696.4" width="2.2" height="1.1" fill="#6060c0"/>
<rect x="33.6" y="693.3" width="2.2" height="1.1" fill="#6060c0"/>
<rect x="31.6" y="690.1" width="4.2" height="1.3" fill="#7878e8"/>
<text x="29" y="693.3" fill="#8c8cff" text-anchor="end" stroke="#8c8cff" stroke-width="0.3">5</text>
<rect x="33.6" y="687.0" width="2.2" height="1.1" fill="#6060c0"/>
<rect x="33.6" y="683.9" width="2.2" height="1.1" fill="#6060c0"/>
<rect x="33.6" y="680.8" width="2.2" height="1.1" fill="#6060c0"/>
<rect x="31.6" y="677.5" width="4.2" height="1.3" fill="#7878e8"/>
<text x="29" y="680.7" fill="#8c8cff" text-anchor="end" stroke="#8c8cff" stroke-width="0.3">10</text>
<rect x="33.6" y="674.5" width="2.2" height="1.1" fill="#6060c0"/>
<rect x="33.6" y="671.4" width="2.2" height="1.1" fill="#6060c0"/>
<rect x="33.6" y="668.2" width="2.2" height="1.1" fill="#6060c0"/>
<rect x="31.6" y="665.0" width="4.2" height="1.3" fill="#7878e8"/>
<text x="29" y="668.2" fill="#8c8cff" text-anchor="end" stroke="#8c8cff" stroke-width="0.3">15</text>
<rect x="33.6" y="662.0" width="2.2" height="1.1" fill="#6060c0"/>
<rect x="33.6" y="658.8" width="2.2" height="1.1" fill="#6060c0"/>
<rect x="33.6" y="655.7" width="2.2" height="1.1" fill="#6060c0"/>
<rect x="31.6" y="652.5" width="4.2" height="1.3" fill="#7878e8"/>
<text x="29" y="655.7" fill="#8c8cff" text-anchor="end" stroke="#8c8cff" stroke-width="0.3">20</text>
<rect x="33.6" y="649.4" width="2.2" height="1.1" fill="#6060c0"/>
<rect x="33.6" y="646.3" width="2.2" height="1.1" fill="#6060c0"/>
<rect x="33.6" y="643.1" width="2.2" height="1.1" fill="#6060c0"/>
<rect x="31.6" y="639.9" width="4.2" height="1.3" fill="#7878e8"/>
<text x="29" y="643.1" fill="#8c8cff" text-anchor="end" stroke="#8c8cff" stroke-width="0.3">25</text>
<rect x="33.6" y="636.9" width="2.2" height="1.1" fill="#6060c0"/>
<rect x="33.6" y="633.7" width="2.2" height="1.1" fill="#6060c0"/>
<rect x="33.6" y="630.6" width="2.2" height="1.1" fill="#6060c0"/>
<rect x="31.6" y="627.4" width="4.2" height="1.3" fill="#7878e8"/>
<text x="29" y="630.6" fill="#8c8cff" text-anchor="end" stroke="#8c8cff" stroke-width="0.3">30</text>
<rect x="33.6" y="624.3" width="2.2" height="1.1" fill="#6060c0"/>
<rect x="33.6" y="621.2" width="2.2" height="1.1" fill="#6060c0"/>
<rect x="33.6" y="618.1" width="2.2" height="1.1" fill="#6060c0"/>
<rect x="31.6" y="614.8" width="4.2" height="1.3" fill="#7878e8"/>
<text x="29" y="618.0" fill="#8c8cff" text-anchor="end" stroke="#8c8cff" stroke-width="0.3">35</text>
<rect x="33.6" y="611.8" width="2.2" height="1.1" fill="#6060c0"/>
<rect x="33.6" y="608.7" width="2.2" height="1.1" fill="#6060c0"/>
<rect x="33.6" y="605.5" width="2.2" height="1.1" fill="#6060c0"/>
<rect x="31.6" y="602.3" width="4.2" height="1.3" fill="#7878e8"/>
<text x="29" y="605.5" fill="#8c8cff" text-anchor="end" stroke="#8c8cff" stroke-width="0.3">40</text>
<rect x="33.6" y="599.3" width="2.2" height="1.1" fill="#6060c0"/>
<rect x="33.6" y="596.1" width="2.2" height="1.1" fill="#6060c0"/>
<rect x="33.6" y="593.0" width="2.2" height="1.1" fill="#6060c0"/>
<rect x="31.6" y="589.8" width="4.2" height="1.3" fill="#7878e8"/>
<text x="29" y="593.0" fill="#8c8cff" text-anchor="end" stroke="#8c8cff" stroke-width="0.3">45</text>
<rect x="33.6" y="586.7" width="2.2" height="1.1" fill="#6060c0"/>
<rect x="33.6" y="583.6" width="2.2" height="1.1" fill="#6060c0"/>
<rect x="33.6" y="580.5" width="2.2" height="1.1" fill="#6060c0"/>
<rect x="31.6" y="577.2" width="4.2" height="1.3" fill="#7878e8"/>
<text x="29" y="580.4" fill="#8c8cff" text-anchor="end" stroke="#8c8cff" stroke-width="0.3">50</text>
<rect x="33.6" y="574.2" width="2.2" height="1.1" fill="#6060c0"/>
<rect x="33.6" y="571.1" width="2.2" height="1.1" fill="#6060c0"/>
<rect x="33.6" y="567.9" width="2.2" height="1.1" fill="#6060c0"/>
<rect x="31.6" y="564.7" width="4.2" height="1.3" fill="#7878e8"/>
<text x="29" y="567.9" fill="#8c8cff" text-anchor="end" stroke="#8c8cff" stroke-width="0.3">55</text>
<rect x="33.6" y="561.7" width="2.2" height="1.1" fill="#6060c0"/>
<rect x="33.6" y="558.5" width="2.2" height="1.1" fill="#6060c0"/>
<rect x="33.6" y="555.4" width="2.2" height="1.1" fill="#6060c0"/>
<rect x="31.6" y="552.1" width="4.2" height="1.3" fill="#7878e8"/>
<text x="29" y="555.4" fill="#8c8cff" text-anchor="end" stroke="#8c8cff" stroke-width="0.3">60</text>
<rect x="33.6" y="549.1" width="2.2" height="1.1" fill="#6060c0"/>
<rect x="33.6" y="546.0" width="2.2" height="1.1" fill="#6060c0"/>
<rect x="33.6" y="542.8" width="2.2" height="1.1" fill="#6060c0"/>
<rect x="31.6" y="539.6" width="4.2" height="1.3" fill="#7878e8"/>
<text x="29" y="542.8" fill="#8c8cff" text-anchor="end" stroke="#8c8cff" stroke-width="0.3">65</text>
<rect x="33.6" y="536.6" width="2.2" height="1.1" fill="#6060c0"/>
<rect x="33.6" y="533.4" width="2.2" height="1.1" fill="#6060c0"/>
<rect x="33.6" y="530.3" width="2.2" height="1.1" fill="#6060c0"/>
<rect x="31.6" y="527.1" width="4.2" height="1.3" fill="#7878e8"/>
<text x="29" y="530.3" fill="#8c8cff" text-anchor="end" stroke="#8c8cff" stroke-width="0.3">70</text>
<rect x="33.6" y="524.0" width="2.2" height="1.1" fill="#6060c0"/>
<rect x="33.6" y="520.9" width="2.2" height="1.1" fill="#6060c0"/>
<rect x="33.6" y="517.8" width="2.2" height="1.1" fill="#6060c0"/>
<rect x="31.6" y="514.5" width="4.2" height="1.3" fill="#7878e8"/>
<text x="29" y="517.7" fill="#8c8cff" text-anchor="end" stroke="#8c8cff" stroke-width="0.3">75</text>
<rect x="33.6" y="511.5" width="2.2" height="1.1" fill="#6060c0"/>
<rect x="33.6" y="508.4" width="2.2" height="1.1" fill="#6060c0"/>
<rect x="33.6" y="505.2" width="2.2" height="1.1" fill="#6060c0"/>
<rect x="31.6" y="502.0" width="4.2" height="1.3" fill="#7878e8"/>
<text x="29" y="505.2" fill="#8c8cff" text-anchor="end" stroke="#8c8cff" stroke-width="0.3">80</text>
<rect x="33.6" y="499.0" width="2.2" height="1.1" fill="#6060c0"/>
<rect x="33.6" y="495.8" width="2.2" height="1.1" fill="#6060c0"/>
<rect x="33.6" y="492.7" width="2.2" height="1.1" fill="#6060c0"/>
<rect x="31.6" y="489.5" width="4.2" height="1.3" fill="#7878e8"/>
<text x="29" y="492.7" fill="#8c8cff" text-anchor="end" stroke="#8c8cff" stroke-width="0.3">85</text>
<rect x="33.6" y="486.4" width="2.2" height="1.1" fill="#6060c0"/>
<rect x="33.6" y="483.3" width="2.2" height="1.1" fill="#6060c0"/>
<rect x="33.6" y="480.2" width="2.2" height="1.1" fill="#6060c0"/>
<rect x="31.6" y="476.9" width="4.2" height="1.3" fill="#7878e8"/>
<text x="29" y="480.1" fill="#8c8cff" text-anchor="end" stroke="#8c8cff" stroke-width="0.3">90</text>
<rect x="33.6" y="473.9" width="2.2" height="1.1" fill="#6060c0"/>
<rect x="33.6" y="470.8" width="2.2" height="1.1" fill="#6060c0"/>
<rect x="33.6" y="467.6" width="2.2" height="1.1" fill="#6060c0"/>
<rect x="31.6" y="464.4" width="4.2" height="1.3" fill="#7878e8"/>
<text x="29" y="467.6" fill="#8c8cff" text-anchor="end" stroke="#8c8cff" stroke-width="0.3">95</text>
<rect x="33.6" y="461.4" width="2.2" height="1.1" fill="#6060c0"/>
<rect x="33.6" y="458.2" width="2.2" height="1.1" fill="#6060c0"/>
<rect x="33.6" y="455.1" width="2.2" height="1.1" fill="#6060c0"/>
<rect x="31.6" y="451.9" width="4.2" height="1.3" fill="#7878e8"/>
<text x="29" y="455.1" fill="#8c8cff" text-anchor="end" stroke="#8c8cff" stroke-width="0.3">100</text>
</g>
<rect x="110.5" y="708.4" width="1" height="2" fill="#686868"/>
<rect x="133.5" y="708.4" width="1" height="2" fill="#686868"/>
<rect x="156.5" y="708.4" width="1" height="2" fill="#686868"/>
<rect x="179.5" y="708.4" width="1" height="2" fill="#686868"/>
<rect x="202.5" y="708.4" width="1" height="2" fill="#686868"/>
<rect x="225.5" y="708.4" width="1" height="2" fill="#686868"/>
<rect x="248.5" y="708.4" width="1" height="2" fill="#686868"/>
<rect x="271.5" y="708.4" width="1" height="2" fill="#686868"/>
<rect x="294.5" y="708.4" width="1" height="2" fill="#686868"/>
<rect x="317.5" y="708.4" width="1" height="2" fill="#686868"/>
<rect x="340.5" y="708.4" width="1" height="2" fill="#686868"/>
<rect x="363.5" y="708.4" width="1" height="2" fill="#686868"/>
<rect x="386.5" y="708.4" width="1" height="2" fill="#686868"/>
<rect x="409.5" y="708.4" width="1" height="2" fill="#686868"/>
<rect x="432.5" y="708.4" width="1" height="2" fill="#686868"/>
<rect x="455.5" y="708.4" width="1" height="2" fill="#686868"/>
<rect x="478.5" y="708.4" width="1" height="2" fill="#686868"/>
<rect x="501.5" y="708.4" width="1" height="2" fill="#686868"/>
<rect x="524.5" y="708.4" width="1" height="2" fill="#686868"/>
<rect x="547.5" y="708.4" width="1" height="2" fill="#686868"/>
<rect x="570.5" y="708.4" width="1" height="2" fill="#686868"/>
<rect x="593.5" y="708.4" width="1" height="2" fill="#686868"/>
<rect x="616.5" y="708.4" width="1" height="2" fill="#686868"/>
<rect x="639.5" y="708.4" width="1" height="2" fill="#686868"/>
<rect x="662.5" y="708.4" width="1" height="2" fill="#686868"/>
<rect x="685.5" y="708.4" width="1" height="2" fill="#686868"/>
<rect x="708.5" y="708.4" width="1" height="2" fill="#686868"/>
<rect x="731.5" y="708.4" width="1" height="2" fill="#686868"/>
<rect x="754.5" y="708.4" width="1" height="2" fill="#686868"/>
<rect x="777.5" y="708.4" width="1" height="2" fill="#686868"/>
<rect x="800.5" y="708.4" width="1" height="2" fill="#686868"/>
<rect x="823.5" y="708.4" width="1" height="2" fill="#686868"/>
<rect x="846.5" y="708.4" width="1" height="2" fill="#686868"/>
<rect x="869.5" y="708.4" width="1" height="2" fill="#686868"/>
<rect x="892.5" y="708.4" width="1" height="2" fill="#686868"/>
<rect x="915.5" y="708.4" width="1" height="2" fill="#686868"/>
<rect x="938.5" y="708.4" width="1" height="2" fill="#686868"/>
<rect x="961.5" y="708.4" width="1" height="2" fill="#686868"/>
<rect x="984.5" y="708.4" width="1" height="2" fill="#686868"/>
<rect x="1007.5" y="708.4" width="1" height="2" fill="#686868"/>
<rect x="1030.5" y="708.4" width="1" height="2" fill="#686868"/>
<rect x="1053.5" y="708.4" width="1" height="2" fill="#686868"/>
<rect x="1076.5" y="708.4" width="1" height="2" fill="#686868"/>
<rect x="1099.5" y="708.4" width="1" height="2" fill="#686868"/>
<rect x="1122.5" y="708.4" width="1" height="2" fill="#686868"/>
<rect x="1145.5" y="708.4" width="1" height="2" fill="#686868"/>
<rect x="1168.5" y="708.4" width="1" height="2" fill="#686868"/>
<rect x="1191.5" y="708.4" width="1" height="2" fill="#686868"/>
<g font-size="7.3">
<rect x="156.9" y="708.4" width="1.2" height="3.4" fill="#a0a0a0"/>
<text x="157.5" y="720.9" fill="#ffff20" text-anchor="middle" stroke="#ffff20" stroke-width="0.3">23</text>
<rect x="248.9" y="708.4" width="1.2" height="3.4" fill="#a0a0a0"/>
<text x="249.5" y="720.9" fill="#ffff20" text-anchor="middle" stroke="#ffff20" stroke-width="0.3">01</text>
<rect x="340.9" y="708.4" width="1.2" height="3.4" fill="#a0a0a0"/>
<text x="341.5" y="720.9" fill="#ffff20" text-anchor="middle" stroke="#ffff20" stroke-width="0.3">03</text>
<rect x="432.9" y="708.4" width="1.2" height="3.4" fill="#a0a0a0"/>
<text x="433.5" y="720.9" fill="#ffff20" text-anchor="middle" stroke="#ffff20" stroke-width="0.3">05</text>
<rect x="524.9" y="708.4" width="1.2" height="3.4" fill="#a0a0a0"/>
<text x="525.5" y="720.9" fill="#ffff20" text-anchor="middle" stroke="#ffff20" stroke-width="0.3">07</text>
<rect x="616.9" y="708.4" width="1.2" height="3.4" fill="#a0a0a0"/>
<text x="617.5" y="720.9" fill="#ffff20" text-anchor="middle" stroke="#ffff20" stroke-width="0.3">09</text>
<rect x="686.9" y="708.4" width="1.2" height="3.4" fill="#a0a0a0"/>
<text x="687.5" y="720.9" fill="#ffff20" text-anchor="middle" stroke="#ffff20" stroke-width="0.3">12</text>
<rect x="739.9" y="708.4" width="1.2" height="3.4" fill="#a0a0a0"/>
<text x="740.5" y="720.9" fill="#ffff20" text-anchor="middle" stroke="#ffff20" stroke-width="0.3">14</text>
<rect x="831.9" y="708.4" width="1.2" height="3.4" fill="#a0a0a0"/>
<text x="832.5" y="720.9" fill="#ffff20" text-anchor="middle" stroke="#ffff20" stroke-width="0.3">16</text>
<rect x="923.9" y="708.4" width="1.2" height="3.4" fill="#a0a0a0"/>
<text x="924.5" y="720.9" fill="#ffff20" text-anchor="middle" stroke="#ffff20" stroke-width="0.3">18</text>
<rect x="1015.9" y="708.4" width="1.2" height="3.4" fill="#a0a0a0"/>
<text x="1016.5" y="720.9" fill="#ffff20" text-anchor="middle" stroke="#ffff20" stroke-width="0.3">20</text>
<rect x="1107.9" y="708.4" width="1.2" height="3.4" fill="#a0a0a0"/>
<text x="1108.5" y="720.9" fill="#ffff20" text-anchor="middle" stroke="#ffff20" stroke-width="0.3">22</text>
<rect x="1199.9" y="708.4" width="1.2" height="3.4" fill="#a0a0a0"/>
<text x="1200.5" y="720.9" fill="#ffff20" text-anchor="middle" stroke="#ffff20" stroke-width="0.3">00</text>
<text x="584" y="720.9" fill="#ffff20" text-anchor="middle" stroke="#ffff20" stroke-width="0.25">Sun Rise</text>
<text x="911.5" y="720.9" fill="#ffff20" text-anchor="middle" stroke="#ffff20" stroke-width="0.25">Sun Set</text>
</g>
</svg></body></html>
